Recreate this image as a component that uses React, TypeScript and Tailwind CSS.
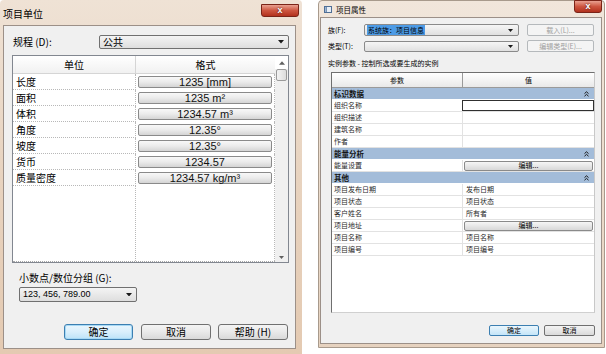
import React from "react";

const cjk = "font-['Noto_Sans_CJK_SC','Noto_Sans',sans-serif]";
const lat = "font-['Liberation_Sans','Noto_Sans_CJK_SC',sans-serif]";

function CloseBtn({ className }: { className: string }) {
  return (
    <div
      className={`absolute flex items-center justify-center rounded-b-[3px] border border-[#7a2418] bg-gradient-to-b from-[#e8a090] via-[#cd5540] to-[#b2301c] ${className}`}
    >
      <span className={`text-white font-bold leading-none ${lat} text-[9px] [text-shadow:0_0_2px_#3a0a00]`}>x</span>
    </div>
  );
}

function Arrow({ size = 6, color = "#1a1a1a" }: { size?: number; color?: string }) {
  return (
    <svg width={size} height={size / 2 + 0.5} viewBox="0 0 6 3.5">
      <path d="M0 0 L6 0 L3 3.5 Z" fill={color} />
    </svg>
  );
}

function UpArrow() {
  return (
    <svg width="6" height="4" viewBox="0 0 6 3.5">
      <path d="M0 3.5 L6 3.5 L3 0 Z" fill="#606060" />
    </svg>
  );
}

function DoubleChevron() {
  return (
    <svg width="5" height="6" viewBox="0 0 5 6">
      <path d="M0.5 2.6 L2.5 0.8 L4.5 2.6 M0.5 5.2 L2.5 3.4 L4.5 5.2" stroke="#1a1a1a" strokeWidth="1" fill="none" />
    </svg>
  );
}

function LeftDialog() {
  const rows: [string, string][] = [
    ["长度", "1235 [mm]"],
    ["面积", "1235 m²"],
    ["体积", "1234.57 m³"],
    ["角度", "12.35°"],
    ["坡度", "12.35°"],
    ["货币", "1234.57"],
    ["质量密度", "1234.57 kg/m³"],
  ];
  const btn =
    "h-[16px] rounded-[3px] border border-[#707070] bg-gradient-to-b from-[#f4f4f4] via-[#e9e9e9] to-[#d9d9d9] flex items-center justify-center text-[10px] leading-none text-black";
  return (
    <div className="relative w-[302px] h-[354px] shrink-0 flex flex-col rounded-t-[4px] bg-gradient-to-b from-[#efe2d5] via-[#e8d3bf] to-[#e4cab2]">
      <div className="h-[25px] flex items-center pl-[3px] pt-[2px] text-[10px] leading-none text-black">项目单位</div>
      <CloseBtn className="right-[3px] top-[4px] w-[38px] h-[13px]" />
      <div className="ml-[3px] w-[293px] h-[324px] border border-[#9c9088] bg-[#f0f0f0] flex flex-col pl-[8px]">
        {/* discipline row */}
        <div className="mt-[9px] h-[14px] flex items-center">
          <div className="w-[87px] pl-[1px] text-[10px] leading-none text-black">规程 (D):</div>
          <div className="w-[190px] h-[14px] border border-[#707070] rounded-[2px] bg-gradient-to-b from-[#f4f4f4] to-[#dedede] flex items-center justify-between pl-[3px] pr-[4px]">
            <span className="text-[10px] leading-none text-black">公共</span>
            <Arrow />
          </div>
        </div>
        {/* table */}
        <div className="mt-[6px] w-[277px] h-[208px] border border-[#828790] bg-white flex">
          <div className="w-[262px] flex flex-col">
            <div className="h-[18px] shrink-0 flex border-b border-[#d5d5d5] bg-gradient-to-b from-white to-[#f1f1f1]">
              <div className="w-[123px] flex items-center justify-center text-[10px] leading-none border-r border-[#d5d5d5] text-black">单位</div>
              <div className="flex-1 flex items-center justify-center text-[10px] leading-none text-black">格式</div>
            </div>
            <div className="flex-1 flex flex-col border-b border-dotted border-[#a8a8a8]">
              {rows.map(([k, v]) => (
                <div key={k} className="h-[16px] shrink-0 flex">
                  <div className="w-[123px] border-r border-b border-dotted border-[#b8b8b8] flex items-center pl-[3px] text-[10px] leading-none text-black">
                    {k}
                  </div>
                  <div className="flex-1 border-r border-dotted border-[#b8b8b8] flex items-start pt-[2px] pl-[2px]">
                    <div
                      className={`w-[134px] h-[12px] rounded-[2px] border border-[#8a8a8a] bg-gradient-to-b from-[#f8f8f8] via-[#ebebeb] to-[#d4d4d4] flex items-center justify-center text-[11px] leading-none text-[#111] ${lat}`}
                    >
                      {v}
                    </div>
                  </div>
                </div>
              ))}
              <div className="flex-1 flex">
                <div className="w-[123px] border-r border-dotted border-[#b8b8b8]" />
                <div className="flex-1 border-r border-dotted border-[#b8b8b8]" />
              </div>
            </div>
          </div>
          {/* scrollbar */}
          <div className="w-[13px] bg-[#f0f0f0] flex flex-col items-center">
            <div className="h-[13px] w-full bg-white flex items-center justify-center">
              <UpArrow />
            </div>
            <div className="w-[11px] h-[12px] border border-[#9a9a9a] rounded-[2px] bg-gradient-to-r from-[#f4f4f4] to-[#dcdcdc]" />
            <div className="flex-1" />
            <div className="h-[13px] w-full flex items-center justify-center pt-[3px]">
              <Arrow size={5} color="#606060" />
            </div>
          </div>
        </div>
        {/* decimal */}
        <div className="mt-[9px] h-[12px] pl-[7px] flex items-center text-[10px] leading-none text-black">小数点/数位分组 (G):</div>
        <div className="ml-[7px] mt-[3px] w-[118px] h-[15px] border border-[#707070] rounded-[2px] bg-gradient-to-b from-[#f4f4f4] to-[#dedede] flex items-center justify-between pl-[3px] pr-[4px]">
          <span className={`text-[9px] leading-none text-black ${lat}`}>123, 456, 789.00</span>
          <Arrow />
        </div>
        {/* buttons */}
        <div className="mt-[22px] flex">
          <div className="ml-[52px] w-[69px] h-[16px] rounded-[3px] border border-[#3c7fb1] bg-gradient-to-b from-[#eaf6fd] via-[#d9effc] to-[#bde3f8] flex items-center justify-center text-[10px] leading-none text-black shadow-[inset_0_0_0_1px_#a7d9f5]">
            确定
          </div>
          <div className={`ml-[8px] w-[70px] ${btn}`}>取消</div>
          <div className={`ml-[7px] w-[70px] ${btn}`}>帮助 (H)</div>
        </div>
      </div>
    </div>
  );
}

type PRow =
  | { kind: "band"; label: string }
  | { kind: "row"; label: string; value?: string; special?: "input" | "button" };

function RightDialog() {
  const prows: PRow[] = [
    { kind: "band", label: "标识数据" },
    { kind: "row", label: "组织名称", special: "input" },
    { kind: "row", label: "组织描述" },
    { kind: "row", label: "建筑名称" },
    { kind: "row", label: "作者" },
    { kind: "band", label: "能量分析" },
    { kind: "row", label: "能量设置", special: "button" },
    { kind: "band", label: "其他" },
    { kind: "row", label: "项目发布日期", value: "发布日期" },
    { kind: "row", label: "项目状态", value: "项目状态" },
    { kind: "row", label: "客户姓名", value: "所有者" },
    { kind: "row", label: "项目地址", special: "button" },
    { kind: "row", label: "项目名称", value: "项目名称" },
    { kind: "row", label: "项目编号", value: "项目编号" },
  ];
  const disBtn =
    "h-[12px] rounded-[2px] border border-[#b5b9bc] bg-[#f4f4f4] flex items-center justify-center text-[7px] leading-none text-[#a0a0a0]";
  return (
    <div className="relative w-[287px] h-[348px] shrink-0 flex flex-col rounded-t-[4px] border border-[#a89a8c] bg-gradient-to-b from-[#f1e6db] via-[#ecdccc] to-[#e6d2bf]">
      <div className="h-[16px] flex items-center pl-[5px] pt-[1px] gap-[4px]">
        <svg width="8" height="7" viewBox="0 0 8 7">
          <rect x="0" y="0" width="8" height="7" fill="#4f6f96" />
          <rect x="3" y="1" width="4" height="5" fill="#e8eef5" />
          <rect x="1" y="1" width="1.5" height="5" fill="#9fb6d2" />
        </svg>
        <span className="text-[7.5px] leading-none text-black">项目属性</span>
      </div>
      <CloseBtn className="right-[2px] top-[-1px] w-[28px] h-[13px]" />
      <div className="ml-[1px] w-[282px] h-[327px] border border-[#9c9088] bg-[#f0f0f0] flex flex-col">
        {/* family row */}
        <div className="mt-[6px] ml-[7px] h-[12px] flex items-center">
          <div className="w-[36px] text-[7px] leading-none text-black">族(F):</div>
          <div className="w-[155px] h-[12px] border border-[#8a8a8a] rounded-[2px] bg-gradient-to-b from-[#f6f6f6] to-[#e0e0e0] flex items-center justify-between pl-[2px] pr-[5px]">
            <span className="text-[7px] leading-none text-black bg-[#4d9be6] px-[1px] py-[1.5px]">系统族：项目信息</span>
            <Arrow size={5} />
          </div>
          <div className={`ml-[8px] w-[67px] ${disBtn}`}>载入(L)...</div>
        </div>
        <div className="mt-[4px] ml-[7px] h-[12px] flex items-center">
          <div className="w-[36px] text-[7px] leading-none text-black">类型(T):</div>
          <div className="w-[155px] h-[11px] border border-[#8a8a8a] rounded-[2px] bg-gradient-to-b from-[#f6f6f6] to-[#e0e0e0] flex items-center justify-end pr-[5px]">
            <Arrow size={5} />
          </div>
          <div className={`ml-[8px] w-[67px] ${disBtn}`}>编辑类型(E)...</div>
        </div>
        <div className="mt-[6px] ml-[7px] h-[10px] flex items-center text-[7px] leading-none text-black">
          实例参数 - 控制所选或要生成的实例
        </div>
        {/* table */}
        <div className="mt-[4px] ml-[10px] w-[264px] h-[241px] border-l border-t border-[#6f6f6f] border-r border-b border-r-[#c8c8c8] border-b-[#d0d0d0] bg-white flex flex-col">
          <div className="h-[15px] shrink-0 flex border-b border-[#9a9a9a] bg-gradient-to-b from-white to-[#e9e9e9]">
            <div className="w-[130px] flex items-center justify-center text-[7px] leading-none text-black">参数</div>
            <div className="flex-1 border-l border-[#9a9a9a] flex items-center justify-center text-[7px] leading-none text-black">值</div>
          </div>
          {prows.map((r, i) =>
            r.kind === "band" ? (
              <div key={i} className="h-[12px] shrink-0 flex items-center justify-between border-b border-white bg-[#a3bcd9] pl-[2px] pr-[5px]">
                <span className="text-[7.5px] leading-none font-bold text-[#141414]">{r.label}</span>
                <DoubleChevron />
              </div>
            ) : (
              <div key={i} className="h-[12px] shrink-0 flex border-b border-[#e2e2e2]">
                <div className="w-[130px] flex items-center pl-[2px] text-[7px] leading-none text-[#2a2a2a]">{r.label}</div>
                {r.special === "input" ? (
                  <div className="flex-1 border border-[#303030] bg-white" />
                ) : r.special === "button" ? (
                  <div className="flex-1 border-l border-[#e2e2e2] pl-[1px] pr-[1px] flex items-center">
                    <div className="w-full h-[10px] rounded-[2px] border border-[#8a8a8a] bg-gradient-to-b from-[#f6f6f6] to-[#d8d8d8] flex items-center justify-center text-[7px] leading-none text-black">
                      编辑...
                    </div>
                  </div>
                ) : (
                  <div className="flex-1 border-l border-[#e2e2e2] flex items-center pl-[3px] text-[7px] leading-none text-[#2a2a2a]">
                    {r.value ?? ""}
                  </div>
                )}
              </div>
            )
          )}
          <div className="flex-1" />
        </div>
        {/* buttons */}
        <div className="mt-[12px] flex justify-end pr-[6px] gap-[5px]">
          <div className="w-[50px] h-[11px] rounded-[2px] border border-[#3c7fb1] bg-gradient-to-b from-[#eaf6fd] to-[#c4e5f8] flex items-center justify-center text-[7px] leading-none text-black">
            确定
          </div>
          <div className="w-[51px] h-[11px] rounded-[2px] border border-[#707070] bg-gradient-to-b from-[#f4f4f4] to-[#dadada] flex items-center justify-center text-[7px] leading-none text-black">
            取消
          </div>
        </div>
      </div>
    </div>
  );
}

export default function App() {
  return (
    <div className={`flex w-[606px] h-[354px] bg-white overflow-hidden ${cjk}`}>
      <LeftDialog />
      <div className="w-[16px] shrink-0" />
      <RightDialog />
    </div>
  );
}
